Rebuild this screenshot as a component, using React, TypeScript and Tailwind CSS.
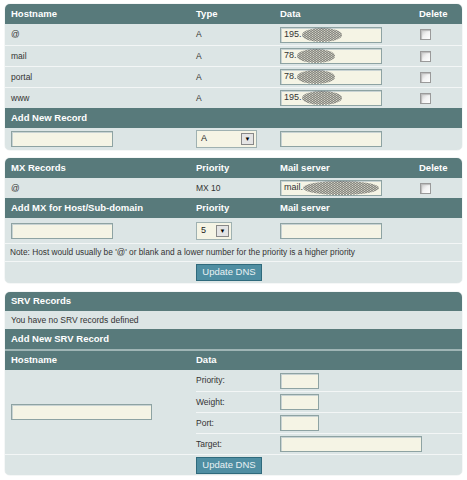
import type { ReactNode } from 'react';

const cols = 'grid grid-cols-[191px_84px_139px_43px] items-center';

function Head({ children, className = 'h-[20px]' }: { children: ReactNode; className?: string }) {
  return (
    <div className={`${cols} ${className} bg-[#587a7b] text-[9.5px] font-bold text-white`}>
      {children}
    </div>
  );
}

function Row({ children, className = 'h-[21px]' }: { children: ReactNode; className?: string }) {
  return (
    <div className={`${cols} ${className} border-t border-[#f3f6f6] bg-[#dce5e5] text-[8.5px] text-[#333]`}>
      {children}
    </div>
  );
}

// scribble used to blank out part of an address
function Scribble({ w = 40 }: { w?: number }) {
  const lines = [1.5, 3.5, 5.5, 7.5, 9.5, 11.5, 13.5];
  return (
    <svg width={w} height="14" viewBox={`0 0 ${w} 14`} className="shrink-0">
      <defs>
        <clipPath id={`blob-${w}`}>
          <ellipse cx={w / 2} cy="7" rx={w / 2} ry="7" />
        </clipPath>
      </defs>
      <g clipPath={`url(#blob-${w})`} fill="none" stroke="#3a3a3a" strokeWidth="0.9">
        {lines.map((y) => {
          let d = `M0 ${y}`;
          for (let x = 0; x <= w; x += 3) d += ` L${x + 1.5} ${y - 1.2} L${x + 3} ${y}`;
          return <path key={y} d={d} />;
        })}
      </g>
    </svg>
  );
}

function Field({ w, children }: { w: string; children?: ReactNode }) {
  return (
    <div
      className={`${w} flex h-[16px] items-center overflow-hidden border border-[#8ea3a3] bg-[#f5f4e5] pl-[3px] text-[9px] text-[#333] shadow-[inset_1px_1px_0_#c9d3d3]`}
    >
      {children}
    </div>
  );
}

function Check() {
  return (
    <div className="ml-[1px] h-[11px] w-[11px] border border-[#9a9a9a] bg-gradient-to-br from-[#c8c8c8] via-[#f2f2f2] to-[#ffffff] shadow-[inset_1px_1px_1px_#bbb]" />
  );
}

function Select({ w, value }: { w: string; value: string }) {
  return (
    <div className={`${w} flex h-[18px] items-center justify-between border border-[#9fb1b1] bg-[#f5f4e5] pl-[4px] pr-[2px] text-[9px] text-[#222]`}>
      <span>{value}</span>
      <span className="flex h-[12px] w-[13px] items-center justify-center border border-[#888] bg-[#e4e4e4] text-[6px] leading-none text-black">
        ▼
      </span>
    </div>
  );
}

function Button() {
  return (
    <div className="flex h-[17px] w-[66px] items-center justify-center border border-[#2f6a7c] bg-[#4f8ea2] text-[9.5px] text-[#e9f1f3]">
      Update DNS
    </div>
  );
}

const records = [
  { host: '@', ip: '195.' },
  { host: 'mail', ip: '78.' },
  { host: 'portal', ip: '78.' },
  { host: 'www', ip: '195.' },
];

export default function App() {
  return (
    <div className="min-h-[480px] w-[467px] bg-white pt-[4px] font-['Liberation_Sans',Arial,sans-serif]">
      {/* A records */}
      <div className="mx-[5px] w-[457px] overflow-hidden rounded-[5px] shadow-[0_0_1px_#9aa]">
        <Head>
          <span className="pl-[6px]">Hostname</span>
          <span>Type</span>
          <span>Data</span>
          <span>Delete</span>
        </Head>
        {records.map((r, i) => (
          <Row key={r.host} className={i === 0 ? 'h-[21px] border-t-0' : 'h-[21px]'}>
            <span className="pl-[6px]">{r.host}</span>
            <span>A</span>
            <Field w="w-[102px]">
              {r.ip}
              <Scribble w={r.ip.length > 3 ? 40 : 38} />
            </Field>
            <Check />
          </Row>
        ))}
        <Head>
          <span className="col-span-4 pl-[6px]">Add New Record</span>
        </Head>
        <Row className="h-[22px] border-t-0">
          <div className="pl-[6px]">
            <Field w="w-[102px]" />
          </div>
          <Select w="w-[61px]" value="A" />
          <Field w="w-[102px]" />
          <span />
        </Row>
      </div>

      {/* MX records */}
      <div className="mx-[5px] mt-[8px] w-[457px] overflow-hidden rounded-[5px] shadow-[0_0_1px_#9aa]">
        <Head>
          <span className="pl-[6px]">MX Records</span>
          <span>Priority</span>
          <span>Mail server</span>
          <span>Delete</span>
        </Head>
        <Row className="h-[20px] border-t-0">
          <span className="pl-[6px]">@</span>
          <span>MX 10</span>
          <Field w="w-[102px]">
            mail.
            <Scribble w={76} />
          </Field>
          <Check />
        </Row>
        <Head>
          <span className="pl-[6px]">Add MX for Host/Sub-domain</span>
          <span>Priority</span>
          <span>Mail server</span>
          <span />
        </Head>
        <Row className="h-[25px] border-t-0">
          <div className="pl-[6px]">
            <Field w="w-[102px]" />
          </div>
          <Select w="w-[36px]" value="5" />
          <Field w="w-[102px]" />
          <span />
        </Row>
        <Row className="h-[18px]">
          <span className="col-span-4 pl-[5px] text-[8.3px]">
            Note: Host would usually be '@' or blank and a lower number for the priority is a higher priority
          </span>
        </Row>
        <Row className="h-[22px]">
          <span />
          <div className="col-span-3">
            <Button />
          </div>
        </Row>
      </div>

      {/* SRV records */}
      <div className="mx-[5px] mt-[9px] w-[457px] overflow-hidden rounded-[5px] shadow-[0_0_1px_#9aa]">
        <Head className="h-[19px]">
          <span className="col-span-4 pl-[6px]">SRV Records</span>
        </Head>
        <Row className="h-[18px] border-t-0">
          <span className="col-span-4 pl-[6px]">You have no SRV records defined</span>
        </Row>
        <Head>
          <span className="col-span-4 pl-[6px]">Add New SRV Record</span>
        </Head>
        <div className="h-[2px] bg-[#9fb5b5]" />
        <Head className="h-[19px]">
          <span className="pl-[6px]">Hostname</span>
          <span className="col-span-3">Data</span>
        </Head>
        <div className="grid grid-cols-[191px_1fr] bg-[#dce5e5] text-[8.5px] text-[#333]">
          <div className="flex items-center pl-[6px]">
            <Field w="w-[141px]" />
          </div>
          <div>
            {['Priority:', 'Weight:', 'Port:', 'Target:'].map((label, i) => (
              <div
                key={label}
                className={`grid h-[21px] grid-cols-[84px_1fr] items-center ${i === 0 ? 'h-[20px]' : 'border-t border-[#f3f6f6]'}`}
              >
                <span>{label}</span>
                <Field w={label === 'Target:' ? 'w-[142px]' : 'w-[39px]'} />
              </div>
            ))}
          </div>
        </div>
        <Row className="h-[21px]">
          <span />
          <div className="col-span-3">
            <Button />
          </div>
        </Row>
      </div>
    </div>
  );
}
